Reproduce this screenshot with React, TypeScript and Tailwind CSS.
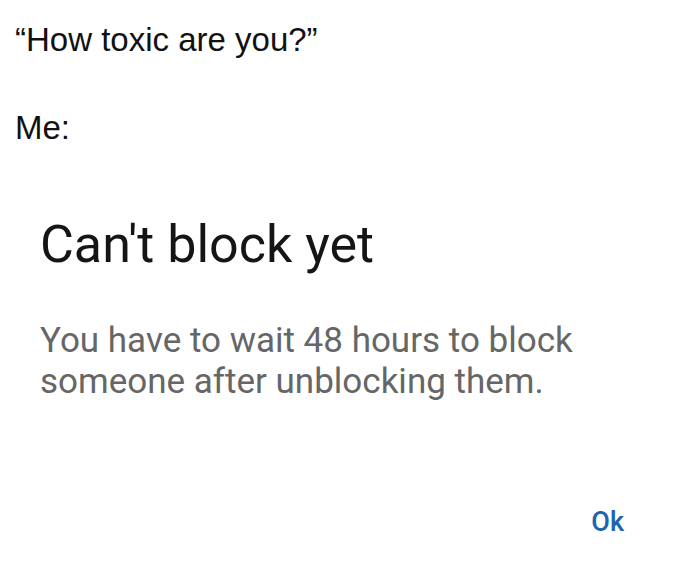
import React from 'react';

export default function App() {
  return (
    <div className="w-[700px] h-[585px] bg-white flex flex-col overflow-hidden">
      {/* Caption above the screenshot */}
      <div className="pt-[23px] pl-[15px] text-[#111111] font-['Liberation_Sans',Arial,sans-serif]">
        <p className="text-[33px] leading-[33px]">“How toxic are you?”</p>
        <p className="mt-[55px] text-[33px] leading-[33px]">Me:</p>
      </div>

      {/* Dialog */}
      <div className="flex flex-col pl-[40px] font-['Roboto',sans-serif]">
        <h1 className="mt-[75px] text-[52px] leading-[52px] text-[#151515]">Can't block yet</h1>
        <p className="mt-[49px] text-[35px] leading-[41px] text-[#666666] whitespace-nowrap">
          You have to wait 48 hours to block
          <br />
          someone after unblocking them.
        </p>
        <div className="mt-[107px] flex justify-end pr-[76px]">
          <button className="text-[27px] leading-[27px] font-medium text-[#1c64ae]">Ok</button>
        </div>
      </div>
    </div>
  );
}
